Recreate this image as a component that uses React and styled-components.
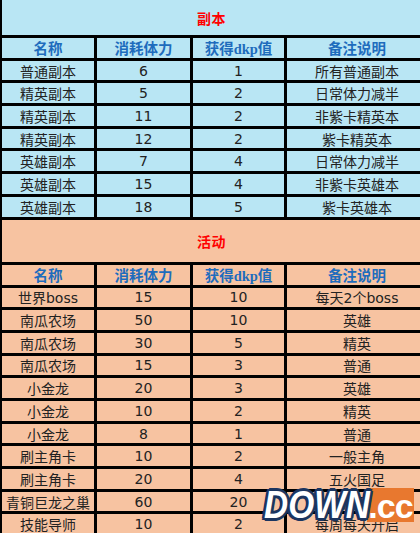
import React from "react";
import styled, { createGlobalStyle } from "styled-components";

const GlobalStyle = createGlobalStyle`
  html, body {
    margin: 0;
    padding: 0;
    background: #ffffff;
  }
  body {
    width: 420px;
    height: 533px;
    overflow: hidden;
    font-family: "DejaVu Sans", "Noto Sans CJK SC", sans-serif;
  }
`;

const tones = {
  blue: "#b9e6f4",
  peach: "#f7c3a1",
};

const dungeons = [
  ["普通副本", "6", "1", "所有普通副本"],
  ["精英副本", "5", "2", "日常体力减半"],
  ["精英副本", "11", "2", "非紫卡精英本"],
  ["精英副本", "12", "2", "紫卡精英本"],
  ["英雄副本", "7", "4", "日常体力减半"],
  ["英雄副本", "15", "4", "非紫卡英雄本"],
  ["英雄副本", "18", "5", "紫卡英雄本"],
];

const events = [
  ["世界boss", "15", "10", "每天2个boss"],
  ["南瓜农场", "50", "10", "英雄"],
  ["南瓜农场", "30", "5", "精英"],
  ["南瓜农场", "15", "3", "普通"],
  ["小金龙", "20", "3", "英雄"],
  ["小金龙", "10", "2", "精英"],
  ["小金龙", "8", "1", "普通"],
  ["刷主角卡", "10", "2", "一般主角"],
  ["刷主角卡", "20", "4", "五火国足"],
  ["青铜巨龙之巢", "60", "20", "每周开启"],
  ["技能导师", "10", "2", "每周每天开启"],
];

const headers = ["名称", "消耗体力", "获得dkp值", "备注说明"];

const Sheet = styled.div`
  position: relative;
  width: 420px;
  height: 533px;
  overflow: hidden;
  background: #000;
  display: grid;
  grid-template-columns: 92px 93px 91px 140px;
  column-gap: 3px;
  row-gap: 3px;
  padding-left: 2px;
  align-content: start;
`;

const Cell = styled.div`
  height: 19.7px;
  background: ${(p) => tones[p.$tone]};
  display: flex;
  align-items: center;
  justify-content: center;
  font-size: 14px;
  color: #222222;
  white-space: nowrap;
`;

const HeadCell = styled(Cell)`
  font-family: "Liberation Serif", "Noto Sans CJK SC", serif;
  font-weight: bold;
  font-size: 14.5px;
  color: #1e6cbd;
`;

const TitleCell = styled.div`
  grid-column: 1 / -1;
  height: ${(p) => p.$h}px;
  background: ${(p) => tones[p.$tone]};
  display: flex;
  align-items: center;
  padding-left: 195px;
  font-family: "Noto Sans CJK SC", sans-serif;
  font-weight: bold;
  font-size: 14px;
  color: #ff0000;
  letter-spacing: 0.5px;
`;

const Logo = styled.div`
  position: absolute;
  left: 264px;
  top: 486px;
  width: 152px;
  height: 38px;
`;

const DownText = styled.span`
  position: absolute;
  left: 0;
  top: 0;
  z-index: 2;
  font-family: "Liberation Sans", sans-serif;
  font-style: italic;
  font-weight: bold;
  font-size: 38px;
  line-height: 38px;
  color: #ffffff;
  transform: scaleX(0.88);
  transform-origin: left center;
  text-shadow: 3px 0 0 #1b3560, -3px 0 0 #1b3560, 0 3px 0 #1b3560,
    0 -3px 0 #1b3560, 2px 2px 0 #1b3560, -2px 2px 0 #1b3560,
    2px -2px 0 #1b3560, -2px -2px 0 #1b3560, -3px 2px 0 #1b3560;
`;

const CcBox = styled.span`
  position: absolute;
  left: 103px;
  top: 2px;
  z-index: 1;
  width: 47px;
  height: 34px;
  background: #e8782f;
  display: flex;
  align-items: flex-end;
  justify-content: center;
  font-family: "Liberation Sans", sans-serif;
  font-weight: bold;
  font-size: 34px;
  line-height: 32px;
  letter-spacing: -1px;
  color: #ffffff;
`;

function Section({ tone, title, titleHeight, rows }) {
  return (
    <>
      <TitleCell $tone={tone} $h={titleHeight}>
        {title}
      </TitleCell>
      {headers.map((h) => (
        <HeadCell key={h} $tone={tone}>
          {h}
        </HeadCell>
      ))}
      {rows.map((row, i) =>
        row.map((v, j) => (
          <Cell key={`${i}-${j}`} $tone={tone}>
            {v}
          </Cell>
        ))
      )}
    </>
  );
}

export default function App() {
  return (
    <>
      <GlobalStyle />
      <Sheet>
        <Section tone="blue" title="副本" titleHeight={35} rows={dungeons} />
        <Section tone="peach" title="活动" titleHeight={42.4} rows={events} />
        <Logo>
          <DownText>DOWN</DownText>
          <CcBox>.cc</CcBox>
        </Logo>
      </Sheet>
    </>
  );
}
